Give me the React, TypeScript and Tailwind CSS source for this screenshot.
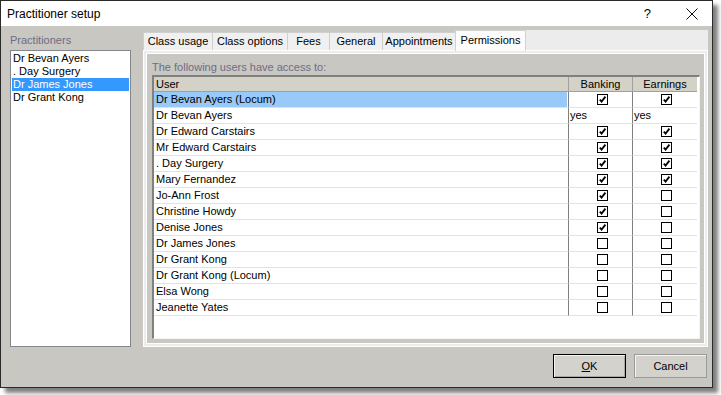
import React from "react";

type Cell = boolean | string;

const practitioners = ["Dr Bevan Ayers", ". Day Surgery", "Dr James Jones", "Dr Grant Kong"];

const tabs = [
  { label: "Class usage", w: "w-[69px]" },
  { label: "Class options", w: "w-[75px]" },
  { label: "Fees", w: "w-[42px]" },
  { label: "General", w: "w-[53px]" },
  { label: "Appointments", w: "w-[73px]" },
];

const users: [string, Cell, Cell][] = [
  ["Dr Bevan Ayers (Locum)", true, true],
  ["Dr Bevan Ayers", "yes", "yes"],
  ["Dr Edward Carstairs", true, true],
  ["Mr Edward Carstairs", true, true],
  [". Day Surgery", true, true],
  ["Mary Fernandez", true, true],
  ["Jo-Ann Frost", true, false],
  ["Christine Howdy", true, false],
  ["Denise Jones", true, false],
  ["Dr James Jones", false, false],
  ["Dr Grant Kong", false, false],
  ["Dr Grant Kong (Locum)", false, false],
  ["Elsa Wong", false, false],
  ["Jeanette Yates", false, false],
];

function Check({ on }: { on: boolean }) {
  return (
    <span className="w-[11px] h-[11px] border border-black bg-white flex items-center justify-center">
      {on && (
        <svg width="9" height="9" viewBox="0 0 9 9">
          <path d="M1.8 4.6 L3.6 6.6 L7.4 1.6" fill="none" stroke="black" strokeWidth="1.8" />
        </svg>
      )}
    </span>
  );
}

function ValueCell({ v, w }: { v: Cell; w: string }) {
  if (typeof v === "string") {
    return (
      <div className={`${w} h-full border-l border-b border-l-[#808080] border-b-[#e2e2e2] pl-[1px] leading-[15px]`}>
        {v}
      </div>
    );
  }
  return (
    <div className={`${w} h-full border-l border-b border-l-[#808080] border-b-[#e2e2e2] flex items-center justify-center pl-[3px]`}>
      <Check on={v} />
    </div>
  );
}

export default function App() {
  return (
    <div className="w-[721px] h-[395px] bg-white overflow-hidden font-['Liberation_Sans',Arial,sans-serif] text-[11px] text-black">
      <div className="w-[713px] h-[388px] border border-[#2a2a2a] bg-[#c8c7c1] shadow-[5px_5px_4px_rgba(0,0,0,0.5)] flex flex-col">
        {/* title bar */}
        <div className="h-[25px] bg-white flex items-center pl-[6px] text-[12px]">
          <span>Practitioner setup</span>
          <span className="ml-auto text-[13px]">?</span>
          <svg className="ml-[35px] mr-[14px]" width="12" height="12" viewBox="0 0 12 12">
            <path d="M0.5 0.5 L11.5 11.5 M11.5 0.5 L0.5 11.5" stroke="#111" strokeWidth="1" />
          </svg>
        </div>

        <div className="flex-1 flex flex-col pl-[9px] pr-[4px] pt-[4px]">
          <div className="flex items-start gap-[12px]">
            {/* practitioners */}
            <div className="w-[121px] pt-[4px] flex flex-col">
              <div className="h-[13px] leading-[13px] text-[#6d6d88]">Practitioners</div>
              <div className="mt-[3px] h-[297px] border border-[#85878f] bg-white p-[1px]">
                {practitioners.map((p) => (
                  <div
                    key={p}
                    className={`h-[13px] leading-[13px] pl-[1px] ${p === "Dr James Jones" ? "bg-[#3399ff] text-white" : ""}`}
                  >
                    {p}
                  </div>
                ))}
              </div>
            </div>

            {/* tab control */}
            <div className="w-[565px] flex flex-col">
              <div className="h-[20px] flex items-end">
                {tabs.map((t) => (
                  <div
                    key={t.label}
                    className={`${t.w} h-[18px] border-l border-t border-[#cfcfcf] bg-[#f0f0f0] flex items-center justify-center`}
                  >
                    {t.label}
                  </div>
                ))}
                <div className="w-[71px] h-[21px] -mb-[1px] relative z-10 border border-b-0 border-[#d2d2d2] bg-[#fcfcfc] flex items-center justify-center pb-[2px]">
                  Permissions
                </div>
                <div className="flex-1 h-[20px] bg-[#ececec]" />
              </div>

              <div className="h-[297px] border border-white bg-[#ececec] p-[2px]">
                <div className="h-full border border-white bg-[#c8c7c1] flex flex-col pl-[5px] pr-[4px] pb-[4px]">
                  <div className="h-[21px] pt-[7px] leading-[13px] text-[#6d6d88]">The following users have access to:</div>
                  <div className="flex-1 bg-white border-t-2 border-l-2 border-r border-b border-t-[#808080] border-l-[#808080] border-r-[#f4f4f4] border-b-[#f4f4f4]">
                    <div className="h-[15px] flex leading-[14px]">
                      <div className="w-[414px] bg-[#d4d1c6] border-b border-[#a0a0a0] pl-[2px]">User</div>
                      <div className="w-[64px] bg-[#d4d1c6] border-b border-l border-[#a0a0a0] text-center">Banking</div>
                      <div className="w-[65px] bg-[#d4d1c6] border-b border-l border-[#a0a0a0] text-center">Earnings</div>
                    </div>
                    {users.map(([name, bank, earn], i) => (
                      <div key={name} className="h-[16px] flex">
                        <div className="w-[414px] h-full border-b border-[#e2e2e2] pr-[1px]">
                          <div className={`h-full pl-[2px] leading-[15px] ${i === 0 ? "bg-[#99c9f9]" : ""}`}>{name}</div>
                        </div>
                        <ValueCell v={bank} w="w-[64px]" />
                        <ValueCell v={earn} w="w-[65px]" />
                      </div>
                    ))}
                  </div>
                </div>
              </div>
            </div>
          </div>

          {/* buttons */}
          <div className="flex justify-end gap-[8px] mt-[7px] pr-[1px]">
            <button className="w-[73px] h-[24px] border border-black bg-[#d3d2cd] shadow-[inset_1px_1px_0_#f4f4f4,inset_-1px_-1px_0_#a8a8a8] text-[11px]">
              <span className="underline">O</span>K
            </button>
            <button className="w-[73px] h-[24px] border border-[#9a9a9a] bg-[#d3d2cd] shadow-[inset_1px_1px_0_#f4f4f4] text-[11px]">
              Cancel
            </button>
          </div>
        </div>
      </div>
    </div>
  );
}
